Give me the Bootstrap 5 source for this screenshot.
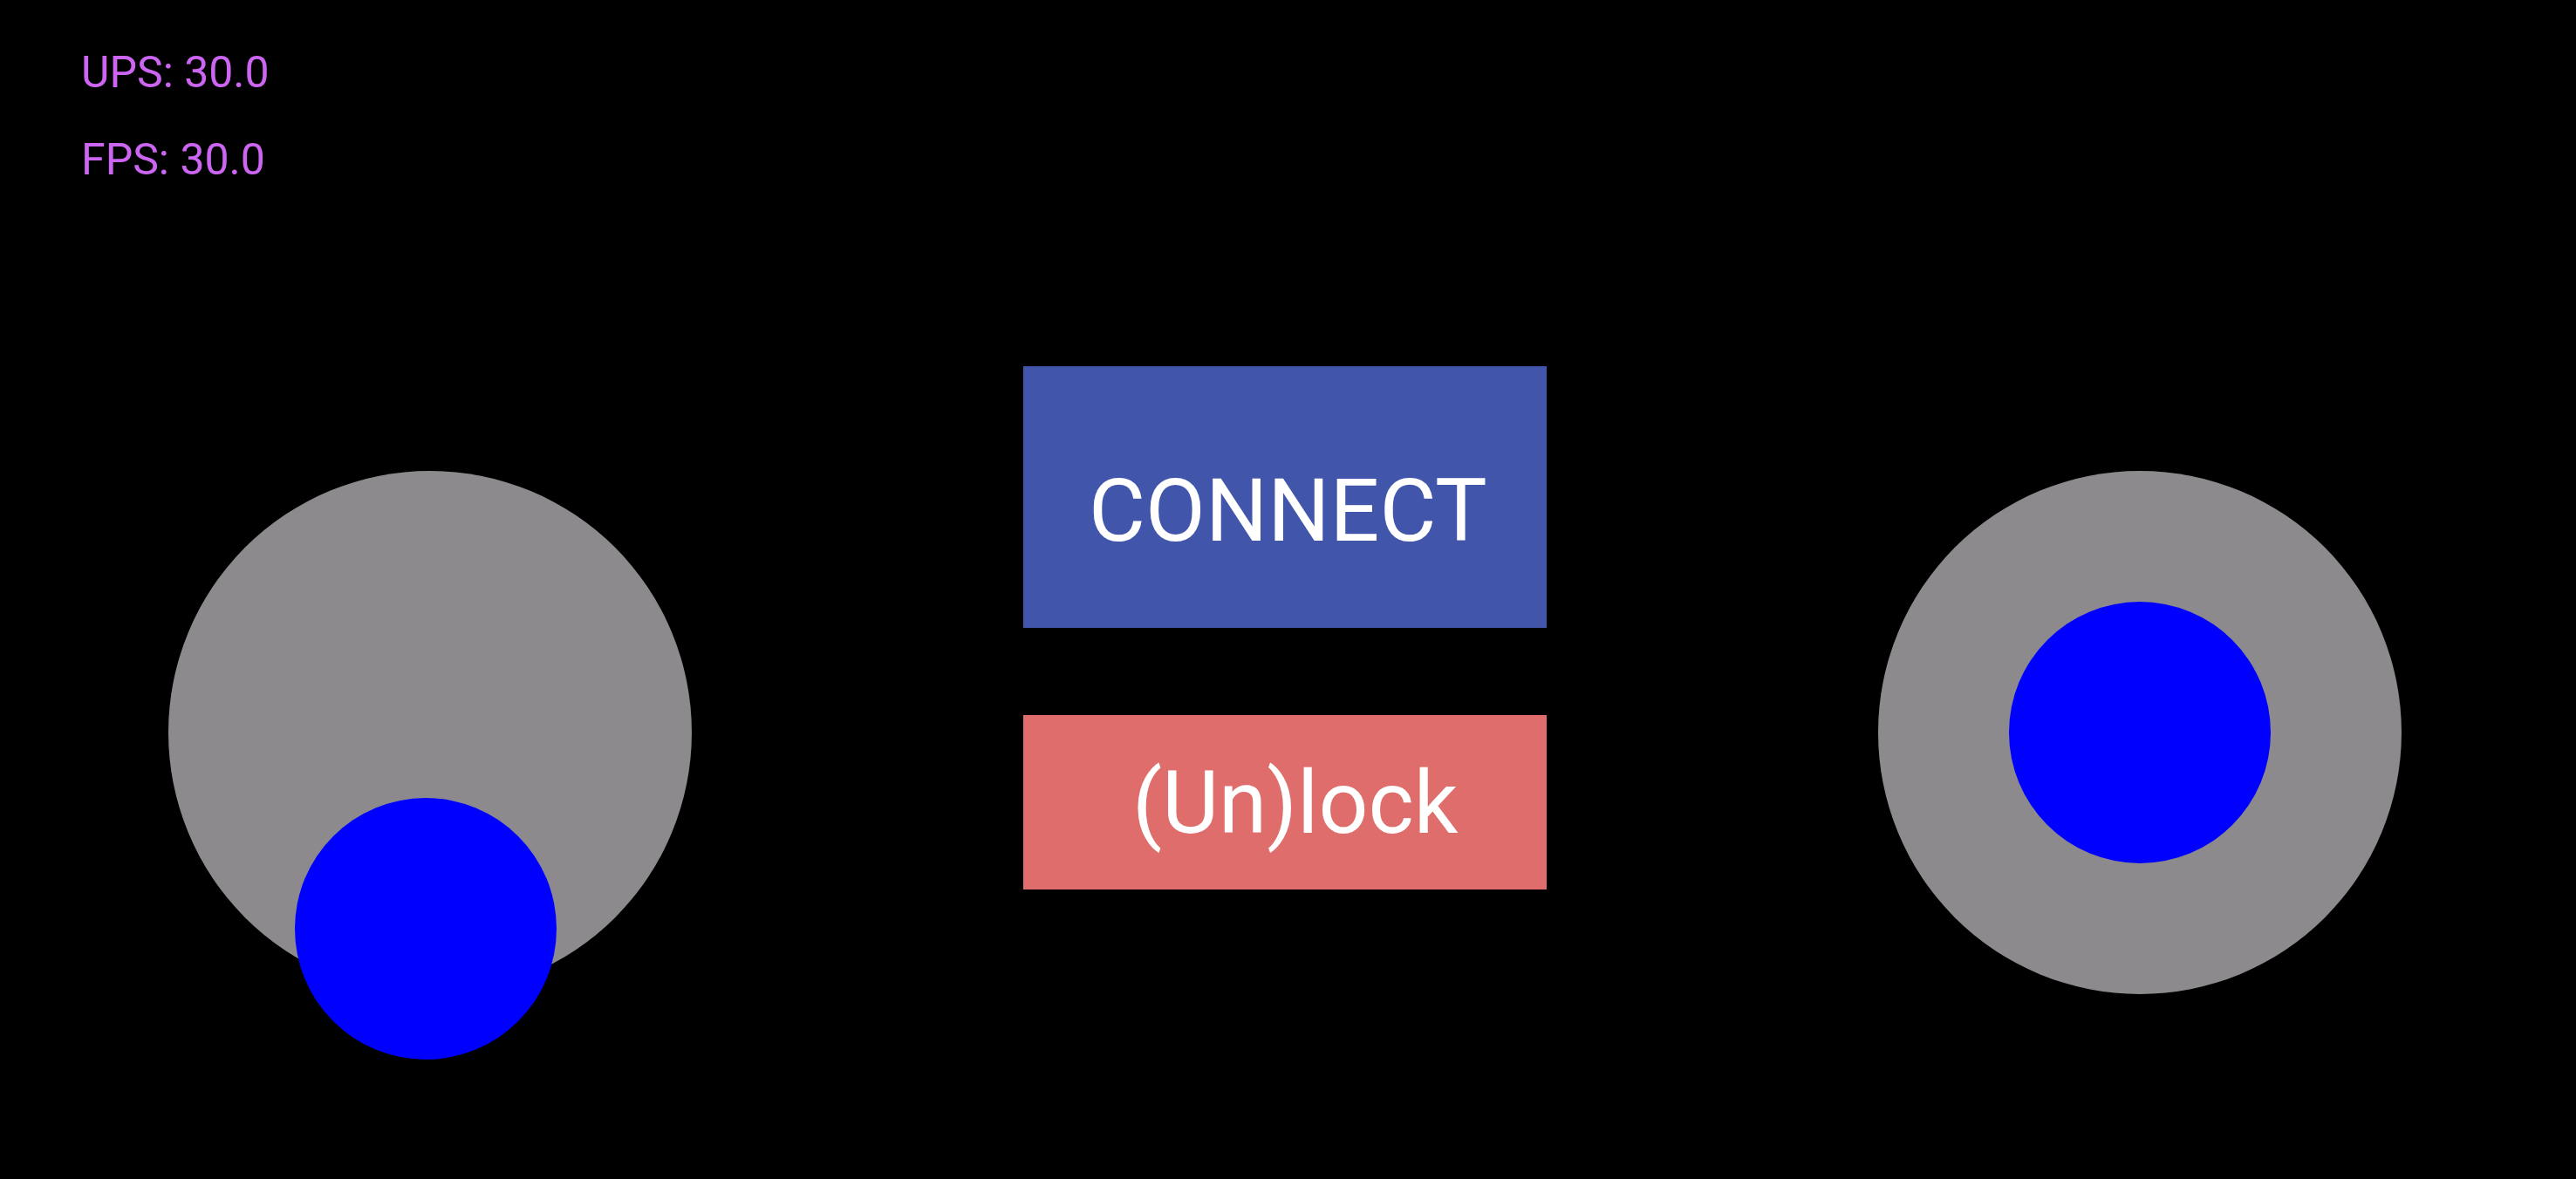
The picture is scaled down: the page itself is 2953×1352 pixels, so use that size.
<!DOCTYPE html>
<html lang="en">
<head>
<meta charset="utf-8">
<meta name="viewport" content="width=device-width, initial-scale=1">
<title>Remote control</title>
<link href="https://cdn.jsdelivr.net/npm/bootstrap@5.3.0/dist/css/bootstrap.min.css" rel="stylesheet">
<style>
  body { font-family: Roboto, "Liberation Sans", sans-serif; background: #000; }
  .telemetry { padding: 33px 93px 0; font-size: 50px; line-height: 100px; color: #cc66f2; }
  .controls { padding: 187px 200px 0 193px; }
  .stick { width: 600px; height: 600px; margin-top: 120px; background: #8c8a8c; }
  .knob { width: 300px; height: 300px; background: #00f; transform: translate(-50%, -50%); }
  .actions { width: 600px; gap: 100px; }
  .action { font-size: 100px; line-height: 100px; color: #fff; border: 0; border-radius: 0; text-align: left; }
  .action:hover { color: #fff; }
  .action-connect, .action-connect:hover { height: 300px; padding: 32px 0 0 75px; background: #4155ab; }
  .action-lock, .action-lock:hover { height: 200px; padding: 2px 0 0 125px; background: #df6d6b; }
</style>
</head>
<body class="min-vh-100">
<header class="telemetry">
  <div>UPS: 30.0</div>
  <div>FPS: 30.0</div>
</header>
<main class="controls d-flex justify-content-between align-items-start">
  <div class="stick rounded-circle position-relative flex-shrink-0" role="group" aria-label="Left joystick">
    <!-- knob position in percent of the pad: pulled down -->
    <div class="knob rounded-circle position-absolute" style="left: 49.2%; top: 87.5%"></div>
  </div>
  <div class="actions d-flex flex-column">
    <button type="button" class="btn action action-connect">CONNECT</button>
    <button type="button" class="btn action action-lock">(Un)lock</button>
  </div>
  <div class="stick rounded-circle position-relative flex-shrink-0" role="group" aria-label="Right joystick">
    <div class="knob rounded-circle position-absolute" style="left: 50%; top: 50%"></div>
  </div>
</main>
<script src="https://cdn.jsdelivr.net/npm/bootstrap@5.3.0/dist/js/bootstrap.bundle.min.js"></script>
</body>
</html>
